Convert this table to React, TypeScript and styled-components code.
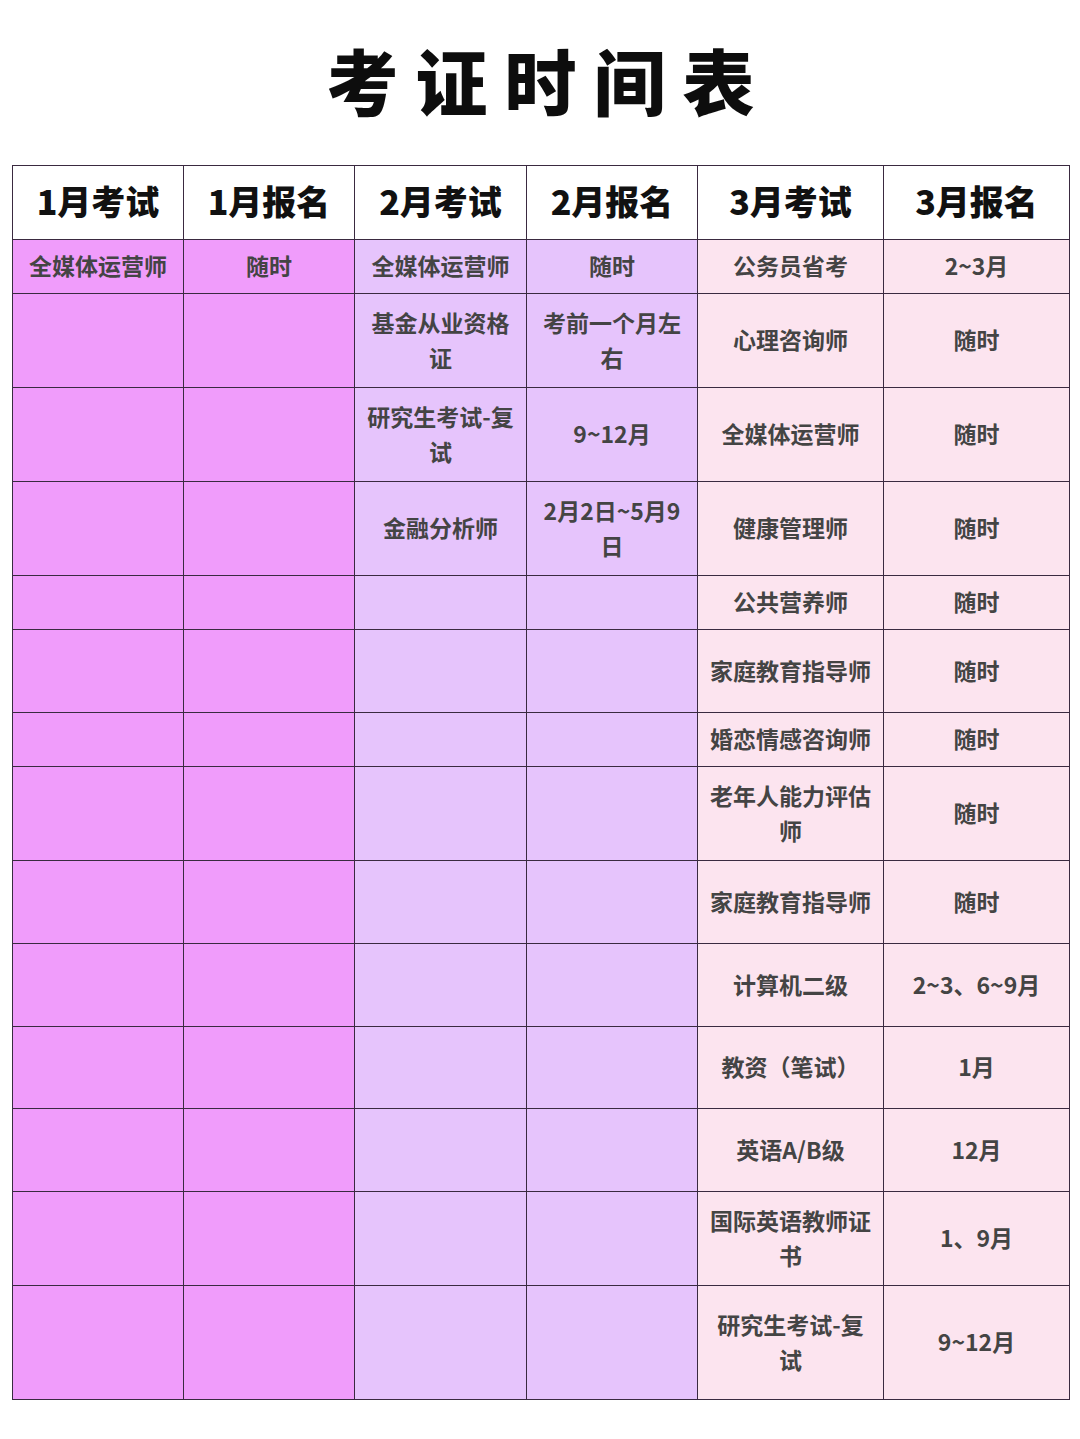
import React from "react";
import styled, { createGlobalStyle } from "styled-components";

const GlobalStyle = createGlobalStyle`
  html, body {
    margin: 0;
    padding: 0;
    background: #ffffff;
  }
  body {
    font-family: "Noto Sans CJK SC", "Noto Sans", sans-serif;
  }
`;

const Page = styled.div`
  width: 1080px;
  height: 1439px;
  box-sizing: border-box;
  padding: 0 11px 0 12px;
  display: flex;
  flex-direction: column;
`;

const Title = styled.h1`
  margin: 0;
  height: 165px;
  display: flex;
  align-items: center;
  justify-content: center;
  padding-bottom: 8px;
  box-sizing: border-box;
  font-size: 72px;
  font-weight: 900;
  letter-spacing: 17px;
  text-indent: 17px;
  color: #0d0d0d;
`;

const Table = styled.table`
  width: 1057px;
  border-collapse: collapse;
  table-layout: fixed;
  border: 1.5px solid #3a2a40;
`;

const HeadCell = styled.th`
  height: 69px;
  padding: 0 0 4px;
  background: #ffffff;
  border: 1.5px solid #3a2a40;
  font-size: 34px;
  font-weight: 900;
  color: #111111;
  text-align: center;
  vertical-align: middle;
`;

const tones: Record<number, string> = {
  0: "#f09cfb",
  1: "#e6c4fc",
  2: "#fce4ef",
};

const Cell = styled.td<{ $tone: number }>`
  padding: 0 10px 2px;
  background: ${p => tones[p.$tone]};
  border: 1.5px solid #3a2a40;
  font-size: 23px;
  font-weight: 700;
  line-height: 35px;
  color: #444444;
  text-align: center;
  vertical-align: middle;
  word-break: break-all;
`;

const Row = styled.tr<{ $h: number }>`
  height: ${p => p.$h}px;
`;

const widths = [171, 171, 172, 171, 186, 186];
const heads = ["1月考试", "1月报名", "2月考试", "2月报名", "3月考试", "3月报名"];

const rows: { h: number; c: string[] }[] = [
  { h: 54, c: ["全媒体运营师", "随时", "全媒体运营师", "随时", "公务员省考", "2~3月"] },
  { h: 94, c: ["", "", "基金从业资格证", "考前一个月左右", "心理咨询师", "随时"] },
  { h: 94, c: ["", "", "研究生考试-复试", "9~12月", "全媒体运营师", "随时"] },
  { h: 94, c: ["", "", "金融分析师", "2月2日~5月9日", "健康管理师", "随时"] },
  { h: 54, c: ["", "", "", "", "公共营养师", "随时"] },
  { h: 83, c: ["", "", "", "", "家庭教育指导师", "随时"] },
  { h: 54, c: ["", "", "", "", "婚恋情感咨询师", "随时"] },
  { h: 94, c: ["", "", "", "", "老年人能力评估师", "随时"] },
  { h: 83, c: ["", "", "", "", "家庭教育指导师", "随时"] },
  { h: 83, c: ["", "", "", "", "计算机二级", "2~3、6~9月"] },
  { h: 82, c: ["", "", "", "", "教资（笔试）", "1月"] },
  { h: 83, c: ["", "", "", "", "英语A/B级", "12月"] },
  { h: 94, c: ["", "", "", "", "国际英语教师证书", "1、9月"] },
  { h: 114, c: ["", "", "", "", "研究生考试-复试", "9~12月"] },
];

export default function App() {
  return (
    <>
      <GlobalStyle />
      <Page>
        <Title>考证时间表</Title>
        <Table>
          <colgroup>
            {widths.map((w, i) => (
              <col key={i} style={{ width: w }} />
            ))}
          </colgroup>
          <thead>
            <tr>
              {heads.map(h => (
                <HeadCell key={h}>{h}</HeadCell>
              ))}
            </tr>
          </thead>
          <tbody>
            {rows.map((r, ri) => (
              <Row key={ri} $h={r.h}>
                {r.c.map((t, ci) => (
                  <Cell key={ci} $tone={Math.floor(ci / 2)}>
                    {t}
                  </Cell>
                ))}
              </Row>
            ))}
          </tbody>
        </Table>
      </Page>
    </>
  );
}
